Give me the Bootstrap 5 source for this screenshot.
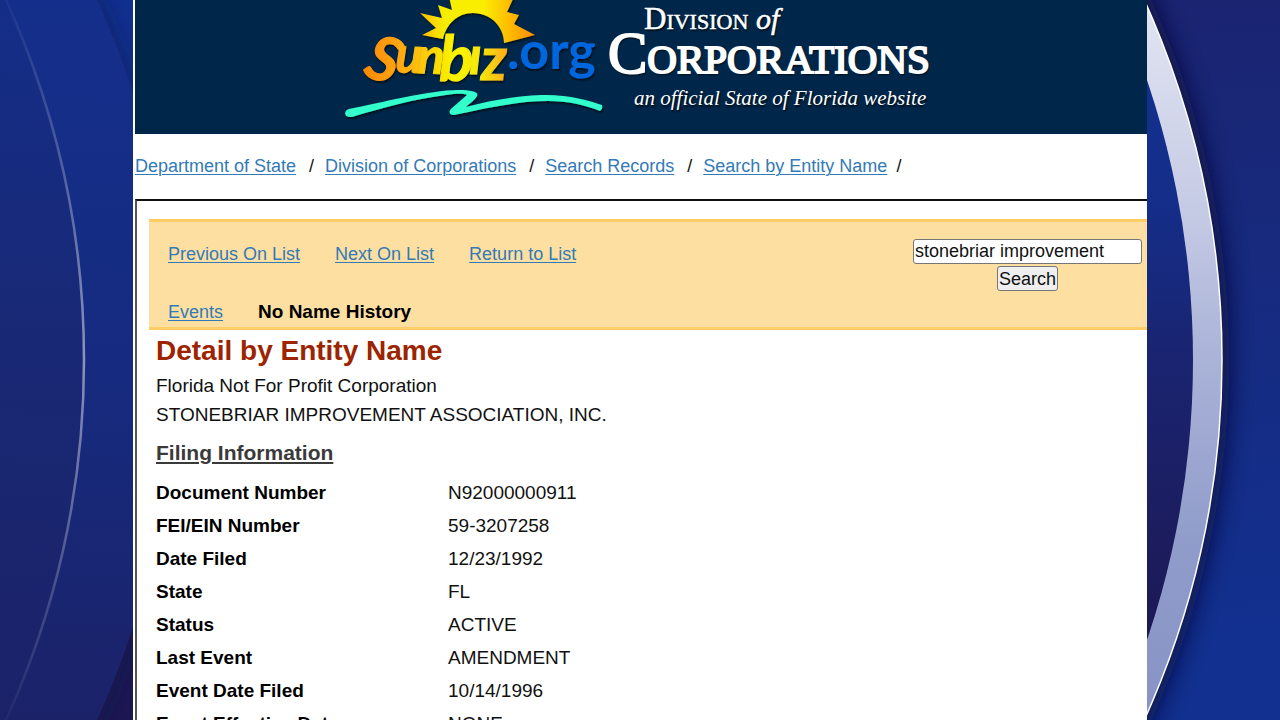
<!DOCTYPE html>
<html lang="en">
<head>
<meta charset="utf-8">
<meta name="viewport" content="width=device-width, initial-scale=1">
<title>Detail by Entity Name</title>
<link href="https://cdn.jsdelivr.net/npm/bootstrap@5.3.0/dist/css/bootstrap.min.css" rel="stylesheet">
<style>
  body { font-family: "Liberation Sans", Arial, sans-serif; font-size: 18px; line-height: 24px; color: #111; background: #152c84; }
  a { color: #337ab7; text-underline-offset: 2px; text-decoration-thickness: 1px; }
  .backdrop { z-index: -1; }
  .sheet { margin: 0 133px; padding-left: 2px; }
  .masthead { background: #00274a; height: 134px; padding-left: 205px; }
  .brand-title { font-family: "Liberation Serif", "Times New Roman", serif; color: #fff; text-shadow: 1px 2px 2px #000b; white-space: nowrap; padding-left: 3px; }
  .line-division { font-size: 31px; line-height: 38px; font-variant-caps: small-caps; padding-left: 36px; -webkit-text-stroke: 0.5px #fff; }
  .line-division em { font-variant-caps: normal; font-size: 30px; }
  .line-corp { font-size: 59px; line-height: 30px; font-variant-caps: small-caps; -webkit-text-stroke: 2px #fff; }
  .line-tag { font-size: 21px; line-height: 60px; font-style: italic; padding-left: 26px; }
  .crumbs { padding: 20px 0 21px; }
  .crumbs .breadcrumb-item + .breadcrumb-item { padding-left: 13px; }
  .crumbs .breadcrumb-item + .breadcrumb-item::before { content: "/"; color: #111; padding-right: 11px; }
  .crumbs .breadcrumb-item:last-child { padding-left: 9px; }
  .panel { border-top: 2px solid #111; border-left: 2px solid #555; padding: 18px 0 0 12px; }
  .navbox { background: #fddfa1; border-top: 3px solid #fc6; border-bottom: 3px solid #fc6; padding: 17px 5px 3px 19px; }
  .navbox nav { padding-top: 3px; gap: 34px; }
  .navrow { gap: 35px; }
  .navrow strong { font-size: 19px; }
  .finder { width: 229px; gap: 2px; }
  .finder input { width: 100%; height: 25px; border: 1px solid #767676; border-radius: 3px; padding: 0 1px; color: #111; }
  .finder button { height: 25px; border: 1px solid #767676; border-radius: 3px; padding: 0 1px; background: #efefef; color: #111; line-height: 22px; }
  .detail { padding-left: 7px; font-size: 19px; }
  .detail h1 { font-size: 28px; line-height: 40px; padding-top: 1px; color: #9c2400; }
  .detail p { line-height: 29px; }
  .detail h2 { font-size: 21px; line-height: 31px; color: #3a3a3a; text-underline-offset: 2px; text-decoration-thickness: 1px; }
  .facts th, .facts td { line-height: 33px; padding: 0; }
  .facts th { width: 292px; color: #000; }
</style>
</head>
<body class="vh-100 overflow-hidden">

<svg class="backdrop position-fixed top-0 start-0 w-100 h-100" viewBox="0 0 1280 720" preserveAspectRatio="none" aria-hidden="true">
  <defs>
    <linearGradient id="far" x1="0" y1="0" x2="0.15" y2="1"><stop offset="0" stop-color="#1c226c"/><stop offset=".5" stop-color="#172a7e"/><stop offset="1" stop-color="#12308f"/></linearGradient>
    <linearGradient id="band" gradientUnits="userSpaceOnUse" x1="0" y1="0" x2="0" y2="720"><stop offset="0" stop-color="#e2e5f2"/><stop offset=".27" stop-color="#c8cde6"/><stop offset=".5" stop-color="#aab3d8"/><stop offset=".75" stop-color="#909cca"/><stop offset="1" stop-color="#8793c5"/></linearGradient>
    <linearGradient id="inner" gradientUnits="userSpaceOnUse" x1="0" y1="0" x2="0" y2="720"><stop offset="0" stop-color="#12308f"/><stop offset=".27" stop-color="#142e8a"/><stop offset=".5" stop-color="#1a2470"/><stop offset=".9" stop-color="#1d1854"/></linearGradient>
    <linearGradient id="left" gradientUnits="userSpaceOnUse" x1="80" y1="0" x2="50" y2="720"><stop offset="0" stop-color="#142f8b"/><stop offset=".5" stop-color="#162b80"/><stop offset="1" stop-color="#1b2268"/></linearGradient>
    <linearGradient id="leftIn" gradientUnits="userSpaceOnUse" x1="60" y1="0" x2="30" y2="720"><stop offset="0" stop-color="#142e88"/><stop offset=".5" stop-color="#192874"/><stop offset="1" stop-color="#1b2268"/></linearGradient>
    <linearGradient id="arc" gradientUnits="userSpaceOnUse" x1="0" y1="0" x2="0" y2="720"><stop offset="0" stop-color="#fff" stop-opacity=".03"/><stop offset=".5" stop-color="#fff" stop-opacity=".5"/><stop offset="1" stop-color="#fff" stop-opacity=".03"/></linearGradient>
    <filter id="soft" x="-20%" y="-20%" width="140%" height="140%"><feGaussianBlur stdDeviation="12"/></filter>
  </defs>
  <rect width="1280" height="720" fill="url(#far)"/>
  <circle cx="356" cy="360" r="873" fill="#0b1038" opacity=".85" filter="url(#soft)"/>
  <circle cx="349" cy="360" r="873" fill="url(#band)" stroke="#fff" stroke-width="1.5"/>
  <circle cx="318" cy="360" r="875" fill="url(#inner)"/>
  <circle cx="-692" cy="362" r="870" fill="#0b1444" opacity=".5" filter="url(#soft)"/>
  <circle cx="-695" cy="360" r="870" fill="url(#left)"/>
  <circle cx="-786" cy="360" r="870" fill="url(#leftIn)" stroke="url(#arc)" stroke-width="2.5"/>
</svg>

<div class="sheet bg-white min-vh-100">
  <header class="masthead d-flex overflow-hidden">
    <svg class="flex-shrink-0" width="265" height="134" viewBox="340 0 265 134" role="img" aria-label="Sunbiz.org">
      <defs>
        <linearGradient id="sun" gradientUnits="userSpaceOnUse" x1="420" y1="0" x2="535" y2="0"><stop offset="0" stop-color="#fb0"/><stop offset=".22" stop-color="#f6ee00"/><stop offset=".55" stop-color="#fbee00"/><stop offset="1" stop-color="#ff8a00"/></linearGradient>
        <linearGradient id="word" gradientUnits="userSpaceOnUse" x1="360" y1="0" x2="512" y2="0"><stop offset="0" stop-color="#ff8500"/><stop offset=".25" stop-color="#ffa512"/><stop offset=".62" stop-color="#fbf500"/><stop offset=".8" stop-color="#f6e60c"/><stop offset="1" stop-color="#ffa21c"/></linearGradient>
        <filter id="drop" x="-10%" y="-10%" width="125%" height="130%"><feDropShadow dx="1" dy="2" stdDeviation="1" flood-color="#000" flood-opacity=".6"/></filter>
      </defs>
      <g filter="url(#drop)">
        <path fill="url(#sun)" d="M443 39 L422 35 L436 28 L420 13 L442 18 L438 5 L452 10 L448 -8 L512 -8 L513 -1 L507 12 L519 15 L514 24 L535 35 L504 43 C504 27 491 13 473 13 C457 13 446 25 443 39Z"/>
        <path fill="#3fc" d="M349 109 C380 103 430 90 458 90 C472 90 479 92 477 96 C475 100 469 104 466 107 C495 99 525 95 546 95 C570 95 590 101 602 105 Q603 109 600 111 C585 105 568 101 548 101 C520 101 490 107 454 115 C449 115 448 111 452 108 L467 95 C462 93 455 94 446 95 C415 99 385 107 352 117 C344 118 343 111 349 109Z"/>
      </g>
      <g filter="url(#drop)" font-family="Lato, 'Open Sans', sans-serif">
        <text fill="url(#word)" stroke="url(#word)" stroke-width="1" font-weight="700" font-style="italic"><tspan x="362" y="75" rotate="18" font-size="62">S</tspan><tspan x="395" y="72" rotate="2" font-size="50">u</tspan><tspan x="417" y="73" rotate="2" font-size="50">n</tspan><tspan x="439" y="81" rotate="0" font-size="64">b</tspan><tspan x="469" y="74" rotate="0" font-size="52">ı</tspan><tspan x="481" y="80" rotate="0" font-size="60">z</tspan></text>
        <text x="507" y="69" font-size="52" font-weight="700" fill="#06d">.org</text>
      </g>
    </svg>
    <div class="brand-title">
      <div class="line-division">Division <em>of</em></div>
      <div class="line-corp">Corporations</div>
      <div class="line-tag">an official State of Florida website</div>
    </div>
  </header>

  <nav class="crumbs" aria-label="Breadcrumb">
    <ol class="breadcrumb mb-0">
      <li class="breadcrumb-item"><a href="#">Department of State</a></li>
      <li class="breadcrumb-item"><a href="#">Division of Corporations</a></li>
      <li class="breadcrumb-item"><a href="#">Search Records</a></li>
      <li class="breadcrumb-item"><a href="#">Search by Entity Name</a></li>
      <li class="breadcrumb-item"></li>
    </ol>
  </nav>

  <main class="panel">
    <div class="navbox d-flex justify-content-between">
      <nav class="d-flex flex-column" aria-label="Records">
        <div class="navrow d-flex"><a href="#">Previous On List</a><a href="#">Next On List</a><a href="#">Return to List</a></div>
        <div class="navrow d-flex"><a href="#">Events</a><strong class="text-black">No Name History</strong></div>
      </nav>
      <form class="finder d-flex flex-column align-items-center" onsubmit="return false">
        <input type="text" aria-label="Entity name" value="stonebriar improvement">
        <button type="submit">Search</button>
      </form>
    </div>

    <section class="detail">
      <h1 class="fw-bold mb-0">Detail by Entity Name</h1>
      <p class="mb-0">Florida Not For Profit Corporation</p>
      <p class="mb-0">STONEBRIAR IMPROVEMENT ASSOCIATION, INC.</p>
      <h2 class="fw-bold text-decoration-underline mt-2 mb-2">Filing Information</h2>
      <table class="facts w-100">
        <tbody>
          <tr><th scope="row">Document Number</th><td>N92000000911</td></tr>
          <tr><th scope="row">FEI/EIN Number</th><td>59-3207258</td></tr>
          <tr><th scope="row">Date Filed</th><td>12/23/1992</td></tr>
          <tr><th scope="row">State</th><td>FL</td></tr>
          <tr><th scope="row">Status</th><td>ACTIVE</td></tr>
          <tr><th scope="row">Last Event</th><td>AMENDMENT</td></tr>
          <tr><th scope="row">Event Date Filed</th><td>10/14/1996</td></tr>
          <tr><th scope="row">Event Effective Date</th><td>NONE</td></tr>
        </tbody>
      </table>
    </section>
  </main>
</div>

<script src="https://cdn.jsdelivr.net/npm/bootstrap@5.3.0/dist/js/bootstrap.bundle.min.js"></script>
</body>
</html>
